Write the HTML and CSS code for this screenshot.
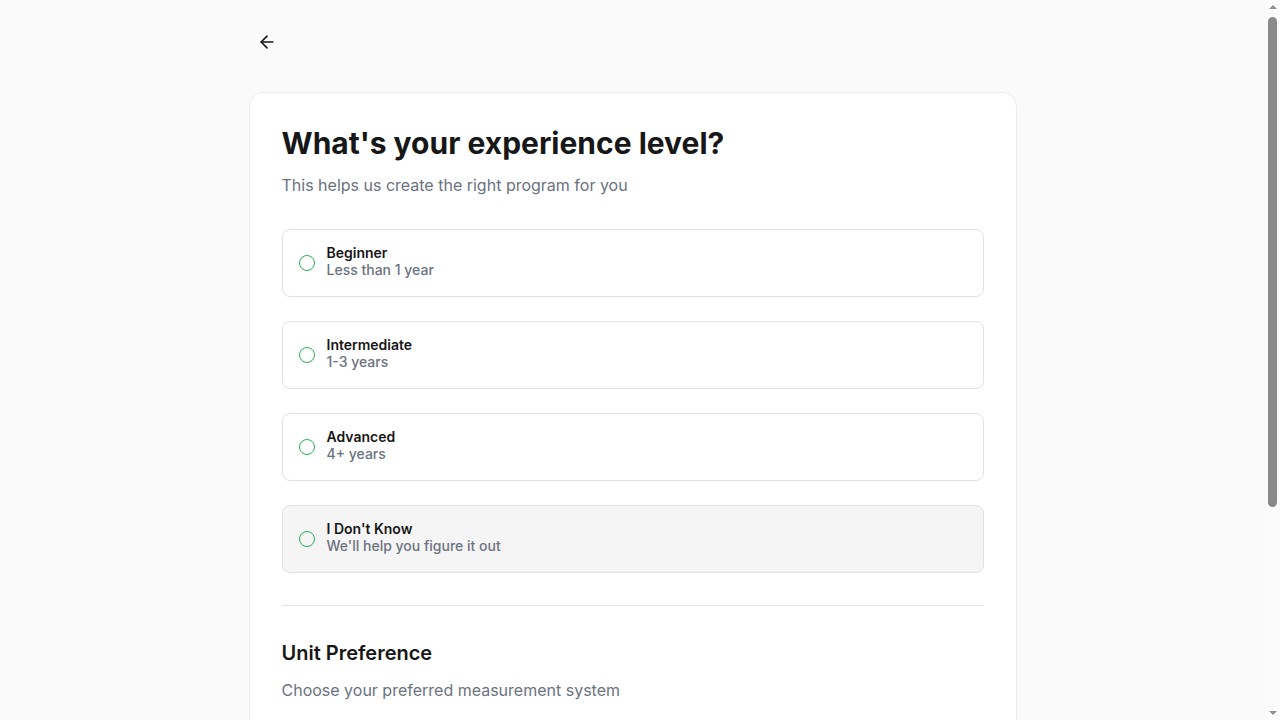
FILE: index.html
```html
<!DOCTYPE html>
<html lang="en">
<head>
<meta charset="utf-8">
<title>Experience level</title>
<link rel="stylesheet" href="styles.css">
</head>
<body>
<div class="viewport">
<div class="page">
  <button class="back" aria-label="Back">
    <svg width="20" height="20" viewBox="0 0 24 24" fill="none" stroke="currentColor" stroke-width="2" stroke-linecap="round" stroke-linejoin="round"><path d="m12 19-7-7 7-7"/><path d="M19 12H5"/></svg>
  </button>
  <main class="card">
    <h1 class="title">What's your experience level?</h1>
    <p class="subtitle">This helps us create the right program for you</p>

    <div class="options">
      <div class="option">
        <span class="radio"></span>
        <div class="option-text">
          <div class="option-title">Beginner</div>
          <div class="option-desc">Less than 1 year</div>
        </div>
      </div>
      <div class="option">
        <span class="radio"></span>
        <div class="option-text">
          <div class="option-title">Intermediate</div>
          <div class="option-desc">1-3 years</div>
        </div>
      </div>
      <div class="option">
        <span class="radio"></span>
        <div class="option-text">
          <div class="option-title">Advanced</div>
          <div class="option-desc">4+ years</div>
        </div>
      </div>
      <div class="option option-hover">
        <span class="radio"></span>
        <div class="option-text">
          <div class="option-title">I Don't Know</div>
          <div class="option-desc">We'll help you figure it out</div>
        </div>
      </div>
    </div>

    <section class="units">
      <h2 class="section-title">Unit Preference</h2>
      <p class="section-sub">Choose your preferred measurement system</p>
      <div class="unit-grid">
        <div class="option">
          <span class="radio"></span>
          <div class="option-text">
            <div class="option-title">Metric</div>
            <div class="option-desc">kg, cm</div>
          </div>
        </div>
        <div class="option">
          <span class="radio"></span>
          <div class="option-text">
            <div class="option-title">Imperial</div>
            <div class="option-desc">lbs, inches</div>
          </div>
        </div>
      </div>
    </section>

    <button class="continue">Continue</button>
  </main>
</div>
</div>
<div class="scrollbar" aria-hidden="true">
  <div class="sb-btn"><span class="tri tri-up"></span></div>
  <div class="sb-track"><div class="sb-thumb"></div></div>
  <div class="sb-btn"><span class="tri tri-down"></span></div>
</div>
</body>
</html>
```

FILE: styles.css
```css
* { box-sizing: border-box; }

html, body {
  margin: 0;
  padding: 0;
  height: 100%;
  overflow: hidden;
  background: #fafafa;
  font-family: Inter, "Noto Sans", sans-serif;
  color: #171717;
}

body {
  display: flex;
}

.viewport {
  flex: 1;
  height: 100vh;
  overflow: hidden;
  background: #fafafa;
}

/* classic scrollbar as shown in the reference */
.scrollbar {
  flex: none;
  width: 15px;
  height: 100vh;
  display: flex;
  flex-direction: column;
  background: #fbfbfb;
}

.sb-btn {
  height: 15px;
  display: flex;
  align-items: center;
  justify-content: center;
}

.tri {
  width: 0;
  height: 0;
  border-left: 4px solid transparent;
  border-right: 4px solid transparent;
}

.tri-up {
  border-bottom: 4px solid #8f8f8f;
  margin-top: -1px;
}

.tri-down {
  border-top: 4px solid #8f8f8f;
  margin-top: 1px;
}

.sb-track {
  flex: 1;
  padding: 2px 3px 0 3px;
}

.sb-thumb {
  height: 490px;
  border-radius: 5px;
  background: #8a8a8a;
}

.page {
  max-width: 768px;
  margin: 0 auto;
  padding: 24px 0 98px;
}

.back {
  display: flex;
  align-items: center;
  justify-content: center;
  width: 36px;
  height: 36px;
  padding: 8px;
  border: 0;
  background: transparent;
  color: #171717;
  cursor: pointer;
}

.card {
  margin-top: 32px;
  background: #ffffff;
  border: 1px solid #ececec;
  border-radius: 14px;
  padding: 32px;
}

.title {
  margin: 0;
  font-size: 30px;
  line-height: 36px;
  font-weight: 700;
  color: #171717;
}

.subtitle {
  margin: 10px 0 0;
  font-size: 16px;
  line-height: 28px;
  color: #6b7280;
}

.options {
  margin-top: 30px;
  display: flex;
  flex-direction: column;
  gap: 24px;
  padding-bottom: 32px;
  border-bottom: 1px solid #e5e5e5;
}

.option {
  display: flex;
  align-items: center;
  gap: 12px;
  padding: 16px;
  border: 1px solid #e1e1e1;
  border-radius: 8px;
  background: #ffffff;
}

.option-hover {
  background: #f5f5f5;
}

.radio {
  flex: none;
  width: 16px;
  height: 16px;
  border-radius: 50%;
  border: 1.3px solid #22b455;
}

.option-text {
  display: flex;
  flex-direction: column;
}

.option-title {
  font-size: 14px;
  line-height: 14px;
  font-weight: 600;
  color: #171717;
}

.option-desc {
  font-size: 14px;
  line-height: 20px;
  font-weight: 500;
  color: #6b7280;
}

.units {
  padding-top: 33px;
}

.section-title {
  margin: 0;
  font-size: 20px;
  line-height: 28px;
  font-weight: 600;
  color: #171717;
}

.section-sub {
  margin: 11px 0 0;
  font-size: 16px;
  line-height: 24px;
  color: #6b7280;
}

.unit-grid {
  margin-top: 32px;
  display: grid;
  grid-template-columns: 1fr 1fr;
  gap: 16px;
}

.continue {
  margin-top: 32px;
  width: 100%;
  height: 48px;
  border: 0;
  border-radius: 8px;
  background: #171717;
  color: #ffffff;
  font-family: inherit;
  font-size: 16px;
  font-weight: 600;
}
```
